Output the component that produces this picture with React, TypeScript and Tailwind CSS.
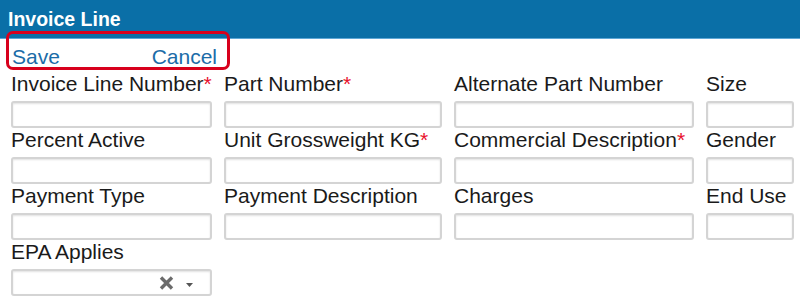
import React from "react";

type Field = { label: string; required?: boolean };

const ROWS: Field[][] = [
  [
    { label: "Invoice Line Number", required: true },
    { label: "Part Number", required: true },
    { label: "Alternate Part Number" },
    { label: "Size" },
  ],
  [
    { label: "Percent Active" },
    { label: "Unit Grossweight KG", required: true },
    { label: "Commercial Description", required: true },
    { label: "Gender" },
  ],
  [
    { label: "Payment Type" },
    { label: "Payment Description" },
    { label: "Charges" },
    { label: "End Use" },
  ],
];

function Label({ label, required }: Field) {
  return (
    <label className="block h-[24px] whitespace-nowrap text-[21px] leading-[24px] text-[#1a1a1a]">
      {label}
      {required && <span className="text-[#e8112d]">*</span>}
    </label>
  );
}

function TextBox() {
  return (
    <input
      type="text"
      className="mt-[5px] block h-[27px] w-full rounded-[3px] border-2 border-[#d4d4d4] bg-white shadow-[inset_0_1px_2px_rgba(0,0,0,0.12)] outline-none"
    />
  );
}

function ClearIcon() {
  return (
    <svg width="13" height="12" viewBox="0 0 13 12" className="shrink-0 overflow-visible">
      <path
        d="M1 0.5 L12 11.5 M12 0.5 L1 11.5"
        stroke="#6b6b6b"
        strokeWidth="3.4"
      />
    </svg>
  );
}

export default function App() {
  return (
    <div className="relative h-[298px] w-[800px] overflow-hidden bg-white font-['Liberation_Sans',Arial,sans-serif]">
      <div className="flex h-[39px] items-start border-b border-[#5ea7d6] bg-[#0a6fa7] px-[8px]">
        <h1 className="text-[19.5px] font-bold leading-[38px] text-white">
          Invoice Line
        </h1>
      </div>

      <div className="flex h-[33px] w-[217px] justify-between pl-[12px] pt-[6px] text-[21px] leading-[24px] text-[#1b6ca8]">
        <a href="#">Save</a>
        <a href="#">Cancel</a>
      </div>

      <div className="grid grid-cols-[201px_218px_240px_88px] gap-x-[12px] pl-[11px]">
        {ROWS.map((row, i) =>
          row.map((field) => (
            <div key={`${i}-${field.label}`}>
              <Label {...field} />
              <TextBox />
            </div>
          ))
        )}
        <div>
          <Label label="EPA Applies" />
          <div className="mt-[5px] flex h-[27px] w-full items-center justify-end gap-[13px] rounded-[3px] border-2 border-[#d4d4d4] bg-white pr-[17px] shadow-[inset_0_1px_2px_rgba(0,0,0,0.12)]">
            <ClearIcon />
            <svg width="7" height="4" viewBox="0 0 7 4" className="mt-[5px] shrink-0">
              <path d="M0 0 H7 L3.5 4 Z" fill="#555" />
            </svg>
          </div>
        </div>
      </div>

      {/* highlight annotation over the action links */}
      <div className="pointer-events-none absolute left-[6px] top-[31px] h-[39px] w-[224px] rounded-[7px] border-[3px] border-[#d8001c]" />
    </div>
  );
}
